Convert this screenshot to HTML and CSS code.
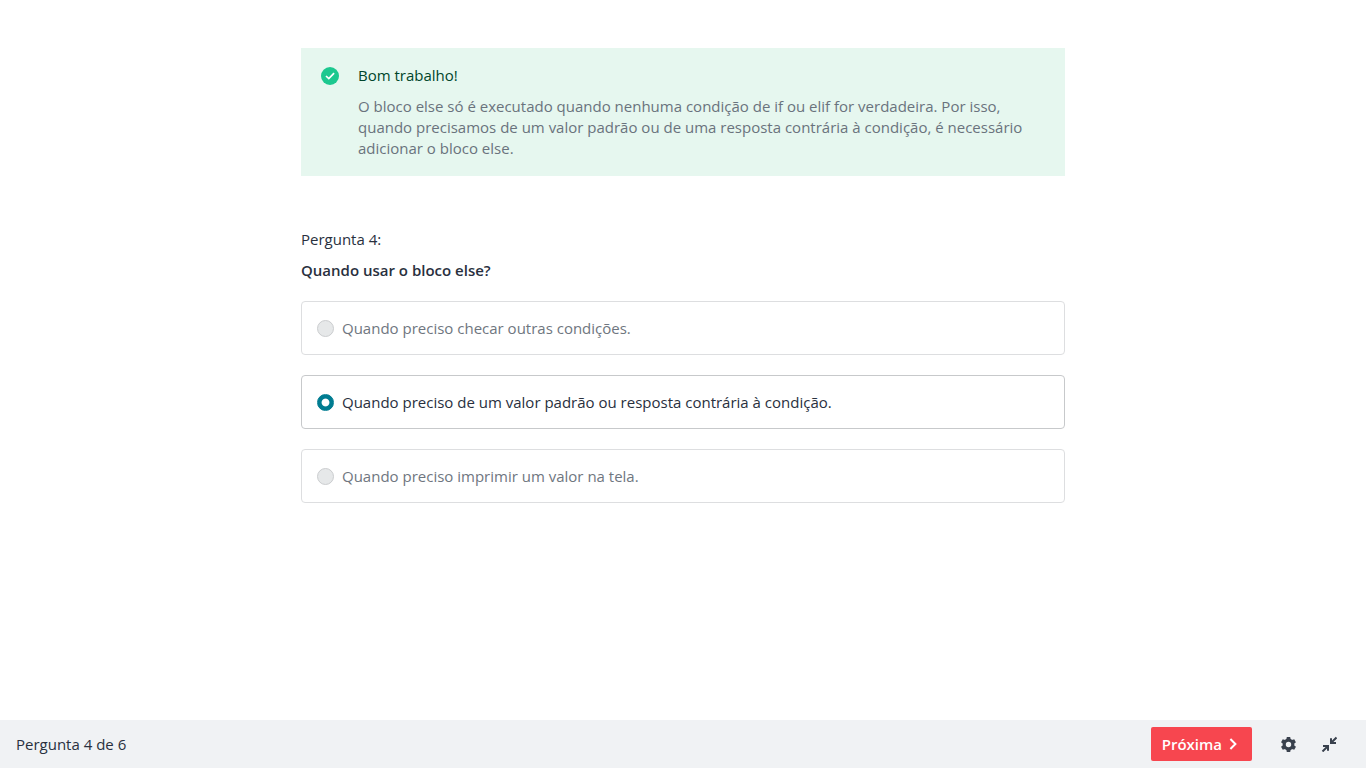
FILE: index.html
```html
<!DOCTYPE html>
<html lang="pt-BR">
<head>
<meta charset="utf-8">
<meta name="viewport" content="width=device-width, initial-scale=1">
<title>Pergunta 4 de 6</title>
<link rel="stylesheet" href="styles.css">
</head>
<body>
<main class="content">
  <section class="feedback" role="status">
    <svg class="feedback-icon" viewBox="0 0 18 18" aria-hidden="true">
      <circle cx="9" cy="9" r="9" fill="#1cc88f"/>
      <path d="M5 9l2.800 2.600 5.300-5.400" fill="none" stroke="#fff" stroke-width="1.700"/>
    </svg>
    <div class="feedback-body">
      <h2 class="feedback-title">Bom trabalho!</h2>
      <p class="feedback-text">O bloco else só é executado quando nenhuma condição de if ou elif for verdadeira. Por isso, quando precisamos de um valor padrão ou de uma resposta contrária à condição, é necessário adicionar o bloco else.</p>
    </div>
  </section>
  <form class="question">
    <p class="question-number">Pergunta 4:</p>
    <h1 class="question-title" id="question-title">Quando usar o bloco else?</h1>
    <div class="options" role="radiogroup" aria-labelledby="question-title">
      <label class="option option-disabled" for="option-1">
        <input class="option-radio" type="radio" name="answer" id="option-1" disabled>
        <span>Quando preciso checar outras condições.</span>
      </label>
      <label class="option" for="option-2">
        <input class="option-radio" type="radio" name="answer" id="option-2" checked>
        <span>Quando preciso de um valor padrão ou resposta contrária à condição.</span>
      </label>
      <label class="option option-disabled" for="option-3">
        <input class="option-radio" type="radio" name="answer" id="option-3" disabled>
        <span>Quando preciso imprimir um valor na tela.</span>
      </label>
    </div>
  </form>
</main>
<footer class="footer">
  <span class="progress">Pergunta 4 de 6</span>
  <div class="actions">
    <button class="next" type="button">
      Próxima
      <svg class="next-icon" viewBox="0 0 8 12" aria-hidden="true"><path d="M1.400 1l5 5-5 5" fill="none" stroke="currentColor" stroke-width="2"/></svg>
    </button>
    <button class="icon-button" type="button" aria-label="Configurações">
      <svg class="icon" viewBox="0 0 16 16" aria-hidden="true">
        <circle cx="8.500" cy="8.500" r="4.300" fill="none" stroke="currentColor" stroke-width="3.200"/>
        <g fill="currentColor">
          <path id="tooth" d="M6.200 4.200L6.800.9h3.400l.6 3.300z"/>
          <use href="#tooth" transform="rotate(60 8.500 8.500)"/>
          <use href="#tooth" transform="rotate(120 8.500 8.500)"/>
          <use href="#tooth" transform="rotate(180 8.500 8.500)"/>
          <use href="#tooth" transform="rotate(240 8.500 8.500)"/>
          <use href="#tooth" transform="rotate(300 8.500 8.500)"/>
        </g>
      </svg>
    </button>
    <button class="icon-button" type="button" aria-label="Sair da tela cheia">
      <svg class="icon" viewBox="0 0 16 16" aria-hidden="true"><g fill="none" stroke="currentColor" stroke-width="2"><path d="M10 2.200V7h5M10.200 6.800l5.300-5.300"/><path d="M2 10h5v4.800M6.800 10.200l-5.300 5.300"/></g></svg>
    </button>
  </div>
</footer>
</body>
</html>
```
FILE: styles.css
```css
* {
  box-sizing: border-box;
}

body {
  display: flex;
  flex-direction: column;
  min-height: 100vh;
  margin: 0;
  background: #fff;
  color: #29303e;
  font-family: "Open Sans", "Noto Sans", sans-serif;
  font-size: 15px;
  line-height: 21px;
}

h1,
h2,
p {
  margin: 0;
  font-size: inherit;
}

button {
  border: 0;
  font: inherit;
  cursor: pointer;
}

.content {
  flex: 1;
  width: 100%;
  max-width: 796px;
  margin: 0 auto;
  padding: 48px 16px;
}

.feedback {
  display: flex;
  gap: 19px;
  padding: 17px 20px;
  background: #e6f7ef;
}

.feedback-icon {
  flex: none;
  width: 18px;
  height: 18px;
  margin-top: 2px;
}

.feedback-body {
  display: grid;
  gap: 10px;
}

.feedback-title {
  color: #00452b;
  font-weight: 400;
}

.feedback-text {
  color: #6a737d;
}

.question {
  display: grid;
  gap: 10px;
  margin-top: 53px;
}

.question-title {
  font-weight: 600;
}

.options {
  display: grid;
  gap: 20px;
  margin-top: 10px;
}

.option {
  display: flex;
  align-items: center;
  gap: 8px;
  min-height: 54px;
  padding: 15px;
  border: 1px solid #c7c9cb;
  border-radius: 4px;
}

.option-disabled {
  border-color: #dddee0;
  color: #6f7680;
}

.option-radio {
  flex: none;
  appearance: none;
  width: 17px;
  height: 17px;
  margin: 0;
  border: 1px solid #cbcdcf;
  border-radius: 50%;
  background: #e6e8e9;
}

.option-radio:checked {
  border-color: #007c91;
  background: radial-gradient(circle closest-side, #fff 46%, #007c91 58%);
}

.footer {
  display: flex;
  align-items: center;
  justify-content: space-between;
  min-height: 48px;
  padding: 0 21px 0 16px;
  background: #f0f2f4;
}

.actions {
  display: flex;
  align-items: center;
}

.next {
  display: flex;
  align-items: center;
  gap: 7px;
  height: 34px;
  margin-right: 20px;
  padding: 0 15px 0 11px;
  border-radius: 2px;
  background: #f7464f;
  color: #fff;
  font-weight: 600;
}

.next-icon {
  width: 8px;
  height: 12px;
}

.icon-button {
  display: grid;
  place-items: center;
  width: 32px;
  height: 34px;
  padding: 0;
  background: none;
  color: #39414d;
}

.icon-button + .icon-button {
  margin-left: 9px;
}

.icon {
  width: 16px;
  height: 16px;
}
```
